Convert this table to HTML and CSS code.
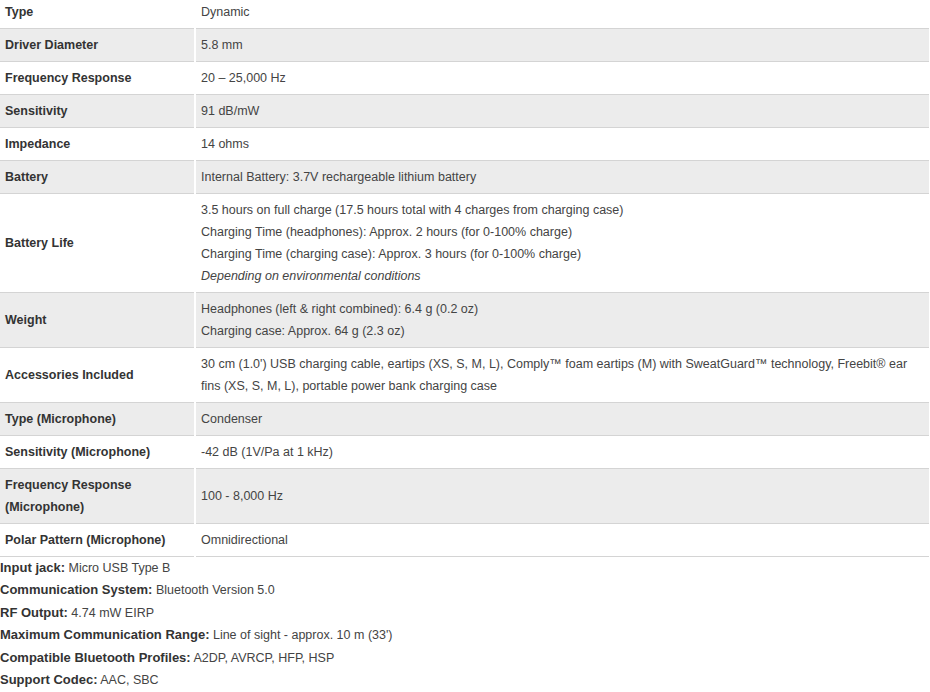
FILE: index.html
```html
<!DOCTYPE html>
<html>
<head>
<meta charset="utf-8">
<link rel="stylesheet" href="styles.css">
</head>
<body>
<table class="specs">
  <tr class="odd"><th>Type</th><td>Dynamic</td></tr>
  <tr class="even"><th>Driver Diameter</th><td>5.8 mm</td></tr>
  <tr class="odd"><th>Frequency Response</th><td>20 – 25,000 Hz</td></tr>
  <tr class="even"><th>Sensitivity</th><td>91 dB/mW</td></tr>
  <tr class="odd"><th>Impedance</th><td>14 ohms</td></tr>
  <tr class="even"><th>Battery</th><td>Internal Battery: 3.7V rechargeable lithium battery</td></tr>
  <tr class="odd"><th>Battery Life</th><td>3.5 hours on full charge (17.5 hours total with 4 charges from charging case)<br>Charging Time (headphones): Approx. 2 hours (for 0-100% charge)<br>Charging Time (charging case): Approx. 3 hours (for 0-100% charge)<br><em>Depending on environmental conditions</em></td></tr>
  <tr class="even"><th>Weight</th><td>Headphones (left &amp; right combined): 6.4 g (0.2 oz)<br>Charging case: Approx. 64 g (2.3 oz)</td></tr>
  <tr class="odd"><th>Accessories Included</th><td>30 cm (1.0') USB charging cable, eartips (XS, S, M, L), Comply™ foam eartips (M) with SweatGuard™ technology, Freebit® ear fins (XS, S, M, L), portable power bank charging case</td></tr>
  <tr class="even"><th>Type (Microphone)</th><td>Condenser</td></tr>
  <tr class="odd"><th>Sensitivity (Microphone)</th><td>-42 dB (1V/Pa at 1 kHz)</td></tr>
  <tr class="even"><th>Frequency Response (Microphone)</th><td>100 - 8,000 Hz</td></tr>
  <tr class="odd"><th>Polar Pattern (Microphone)</th><td>Omnidirectional</td></tr>
</table>
<div class="extra">
  <p><strong>Input jack:</strong> Micro USB Type B</p>
  <p><strong>Communication System:</strong> Bluetooth Version 5.0</p>
  <p><strong>RF Output:</strong> 4.74 mW EIRP</p>
  <p><strong>Maximum Communication Range:</strong> Line of sight - approx. 10 m (33')</p>
  <p><strong>Compatible Bluetooth Profiles:</strong> A2DP, AVRCP, HFP, HSP</p>
  <p><strong>Support Codec:</strong> AAC, SBC</p>
</div>
</body>
</html>
```
FILE: styles.css
```css
html, body {
  margin: 0;
  padding: 0;
  background: #fff;
}
body {
  font-family: "Liberation Sans", Arial, sans-serif;
  font-size: 12.5px;
  color: #3a3a3a;
}
.specs {
  border-collapse: collapse;
  width: 929px;
  margin-top: -4px;
}
.specs th,
.specs td {
  padding: 5px 5px;
  line-height: 22px;
  text-align: left;
  vertical-align: middle;
  border-bottom: 1px solid #d4d4d4;
}
.specs th {
  width: 184px;
  font-weight: bold;
  color: #333;
  border-right: 2px solid #fff;
}
.specs td {
  font-weight: normal;
  color: #444;
}
.specs .even th,
.specs .even td {
  background: #ececec;
}
.specs em {
  font-style: italic;
}
.extra p {
  margin: 0;
  line-height: 22.4px;
  color: #444;
}
.extra strong {
  color: #333;
  font-size: 13px;
}
```
